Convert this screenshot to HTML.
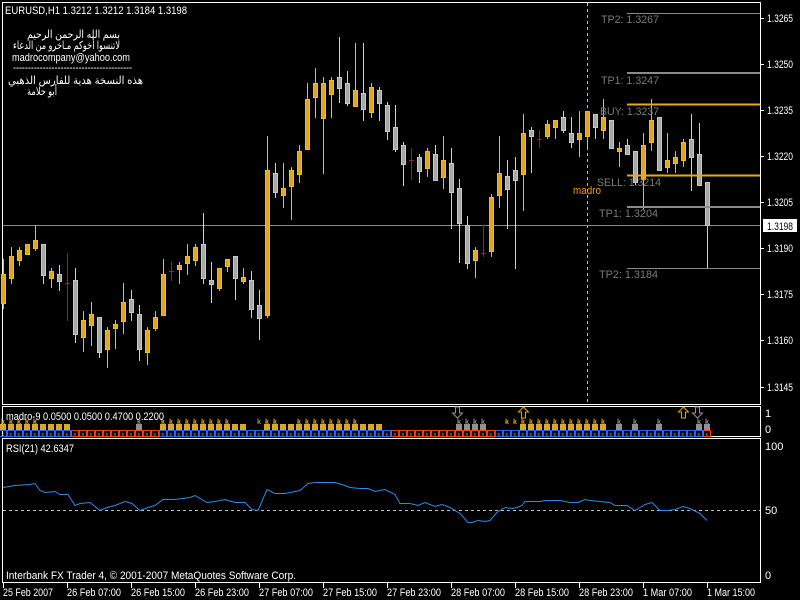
<!DOCTYPE html>
<html><head><meta charset="utf-8">
<style>
body{margin:0;background:#000;width:800px;height:600px;overflow:hidden}
svg{display:block}
text{font-family:"Liberation Sans","DejaVu Sans",sans-serif;font-size:11px}
</style></head><body>
<svg id="s" width="800" height="600" xmlns="http://www.w3.org/2000/svg">
<rect width="800" height="600" fill="#000"/>
<g fill="none" stroke="#fff" stroke-width="1">
<rect x="2.5" y="2.5" width="758" height="402"/>
<rect x="2.5" y="406.5" width="758" height="30"/>
<rect x="2.5" y="438.5" width="758" height="144"/>
</g>
<line x1="587.5" y1="3" x2="587.5" y2="404" stroke="#c0c0c0" stroke-dasharray="3,3"/>
<line x1="3" y1="225.5" x2="760" y2="225.5" stroke="#8a8a8a"/>
<g id="c"></g>
<line x1="627" y1="13.5" x2="760" y2="13.5" stroke="#8a8a8a"/>
<line x1="627" y1="73" x2="760" y2="73" stroke="#8a8a8a" stroke-width="2"/>
<line x1="627" y1="104.5" x2="760" y2="104.5" stroke="#e8a818" stroke-width="2"/>
<line x1="627" y1="175.5" x2="760" y2="175.5" stroke="#e8a818" stroke-width="2"/>
<line x1="627" y1="207" x2="760" y2="207" stroke="#8a8a8a" stroke-width="2"/>
<line x1="627" y1="268.5" x2="760" y2="268.5" stroke="#8a8a8a"/>
<g fill="#7a7a7a" lengthAdjust="spacingAndGlyphs">
<text x="601" y="23" textLength="58" lengthAdjust="spacingAndGlyphs">TP2: 1.3267</text>
<text x="601" y="84" textLength="58" lengthAdjust="spacingAndGlyphs">TP1: 1.3247</text>
<text x="600" y="115" textLength="59" lengthAdjust="spacingAndGlyphs">BUY: 1.3237</text>
<text x="597" y="186" textLength="64" lengthAdjust="spacingAndGlyphs">SELL: 1.3214</text>
<text x="599" y="217" textLength="59" lengthAdjust="spacingAndGlyphs">TP1: 1.3204</text>
<text x="599" y="278" textLength="59" lengthAdjust="spacingAndGlyphs">TP2: 1.3184</text>
</g>
<text x="573" y="194" fill="#f0a000" textLength="28" lengthAdjust="spacingAndGlyphs">madro</text>
<text x="5" y="14" fill="#fff" textLength="182" lengthAdjust="spacingAndGlyphs">EURUSD,H1  1.3212 1.3212 1.3184 1.3198</text>
<g fill="#fff" style="font-family:'DejaVu Sans',sans-serif;font-size:10px">
<text x="27" y="38" textLength="93" lengthAdjust="spacingAndGlyphs">بسم الله الرحمن الرحيم</text>
<text x="13" y="49" textLength="107" lengthAdjust="spacingAndGlyphs">لاتنسوا أخوكم مـاخرو من الدعاء</text>
<text x="12" y="61" textLength="118" lengthAdjust="spacingAndGlyphs" style="font-family:'Liberation Sans',sans-serif;font-size:11px">madrocompany@yahoo.com</text>
<text x="13" y="71" textLength="119" lengthAdjust="spacingAndGlyphs">----------------------------------------</text>
<text x="8" y="84" textLength="135" lengthAdjust="spacingAndGlyphs">هذه النسخة هدية للفارس الذهبي</text>
<text x="27" y="95" textLength="30" lengthAdjust="spacingAndGlyphs">أبو حلامة</text>
</g>
<g id="ax" fill="#fff"></g>
<rect x="763" y="219" width="34" height="13" fill="#fff"/>
<text x="767" y="230" fill="#000" textLength="26" lengthAdjust="spacingAndGlyphs">1.3198</text>
<g id="ind"></g>
<text x="6" y="420" fill="#fff" textLength="158" lengthAdjust="spacingAndGlyphs">madro-9 0.0500 0.0500 0.4700 0.2200</text>
<text x="765" y="417" fill="#fff">1</text>
<text x="765" y="433" fill="#fff">0</text>
<line x1="3" y1="510.5" x2="760" y2="510.5" stroke="#c0c0c0" stroke-dasharray="3,3"/>
<polyline id="rsi" fill="none" stroke="#2a8cf0" stroke-width="1"/>
<text x="6" y="452" fill="#fff" textLength="68" lengthAdjust="spacingAndGlyphs">RSI(21) 42.6347</text>
<text x="765" y="450" fill="#fff">100</text>
<text x="765" y="514" fill="#fff">50</text>
<text x="765" y="579" fill="#fff">0</text>
<text x="6" y="579" fill="#fff" textLength="290" lengthAdjust="spacingAndGlyphs">Interbank FX Trader 4, © 2001-2007 MetaQuotes Software Corp.</text>
<g id="tm" fill="#fff"></g>
</svg>
<script>
var NS="http://www.w3.org/2000/svg";
function el(p,t,a,txt){var e=document.createElementNS(NS,t);for(var k in a)e.setAttribute(k,a[k]);if(txt!=null)e.textContent=txt;document.getElementById(p).appendChild(e);return e;}
var C=[
['y',274,303,259,309],['y',256,278,247,284],['y',250,260,247,266],['y',244,254,244,254],['y',240,248,225,251],
['g',244,275,244,284],['y',271,278,268,288],['g',274,281,265,291],['d',283,283,253,321],['g',280,334,268,343],
['y',320,337,311,352],['y',314,325,302,346],['g',317,352,317,358],['y',330,349,327,368],['y',324,328,320,349],
['y',302,321,283,334],['g',299,312,290,321],['g',314,349,305,361],['y',330,352,327,365],['y',317,328,311,331],
['y',274,315,259,315],['d',271,271,262,281],['y',265,269,262,284],['y',256,263,244,275],['y',247,260,244,266],
['g',244,278,213,284],['g',280,284,262,303],['y',268,288,268,291],['y',259,266,259,272],['g',256,278,256,300],
['y',277,281,268,284],['g',280,309,271,318],['g',305,318,290,340],['y',170,315,136,318],['g',173,192,163,198],
['y',188,195,163,208],['y',170,186,167,220],['y',151,174,145,183],['y',99,149,83,149],['y',83,97,68,118],
['y',83,118,77,174],['y',80,94,77,118],['g',77,88,37,103],['g',83,103,71,106],['y',90,106,43,106],
['g',93,109,43,121],['y',87,112,83,118],['g',90,103,87,121],['g',105,131,102,140],['g',127,149,105,152],
['g',145,164,142,186],['d',160,160,148,180],['g',157,171,154,183],['y',151,168,148,177],['g',154,180,145,180],
['y',160,177,136,189],['g',163,192,148,229],['g',188,223,179,263],['g',225,263,216,269],['y',250,260,247,278],
['d',253,253,225,257],['y',197,251,194,257],['y',173,195,136,208],['g',176,189,160,229],['g',170,180,157,269],
['y',133,174,114,211],['g',130,136,127,173],['d',139,139,130,148],['y',124,136,120,139],['y',120,127,120,139],
['g',117,130,111,133],['g',133,142,117,148],['y',133,139,111,157],['y',111,136,111,148],['g',114,127,114,139],
['y',117,130,99,139],['g',120,148,120,148],['y',148,151,142,167],['g',145,154,139,154],['g',151,182,151,185],
['y',145,179,133,210],['y',120,142,99,151],['g',117,170,117,170],['y',160,167,133,173],['y',157,163,151,173],
['y',142,160,139,167],['g',139,157,114,191],['g',154,185,123,185],['g',182,225,182,268]];
C.forEach(function(c,k){var x=3+8*k;
 var wc=c[0]=='y'?'#f0c000':c[0]=='g'?'#d0d0d0':'#a02020';
 el('c','line',{x1:x+.5,y1:c[3],x2:x+.5,y2:c[4],stroke:wc});
 if(c[0]=='d'){el('c','line',{x1:x-2,y1:c[1]+.5,x2:x+3,y2:c[1]+.5,stroke:wc});}
 else{var h=Math.max(c[2]-c[1],2);el('c','rect',{x:x-1.5,y:c[1]+.5,width:4,height:h,fill:c[0]=='y'?'#e0a820':'#a8a8a8',stroke:c[0]=='y'?'#f0c000':'#c8c8c8'});}
});
var P=['1.3265',18,'1.3250',64,'1.3235',110,'1.3220',156,'1.3205',202,'1.3190',248,'1.3175',294,'1.3160',340,'1.3145',387];
for(var i=0;i<P.length;i+=2){el('ax','line',{x1:760,y1:P[i+1]+.5,x2:764,y2:P[i+1]+.5,stroke:'#fff'});el('ax','text',{x:767,y:P[i+1]+4,textLength:26,lengthAdjust:'spacingAndGlyphs'},P[i]);}
function inR(a,b,k){return k>=a&&k<=b;}
for(var k=0;k<89;k++){var x=3+8*k;
 var red=inR(9,19,k)||inR(49,61,k)||k==88;
 el('ind','rect',{x:x-3.5,y:430.5,width:7,height:6,fill:'none',stroke:red?'#f04010':'#3060f0'});
 el('ind','text',{x:x-1.5,y:436,fill:'#b0b0b0',style:'font-size:5px'},'x');
 var sq=null;
 if(inR(0,8,k)||inR(20,30,k)||inR(33,47,k)||inR(65,75,k))sq='#e0a820';
 if(k==17||inR(57,60,k)||k==77||k==79||k==82||k==87||k==88)sq='#909090';
 if(sq)el('ind','rect',{x:x-3,y:424,width:6,height:6,fill:sq});
 var m=null;
 if(inR(0,4,k)||inR(20,28,k)||inR(33,34,k)||inR(37,44,k)||inR(63,75,k))m='#e0a820';
 if(k==17||k==32||inR(57,60,k)||k==77||k==79||k==82||k==87||k==88)m='#909090';
 if(m)el('ind','text',{x:x-2,y:424,fill:m,style:'font-size:7px;font-weight:bold'},'k');
}
function arrow(x,up,col){var d=up?'M'+(x-2)+' 418 V412 H'+(x-5)+' L'+x+' 407 L'+(x+5)+' 412 H'+(x+2)+' V418 Z':'M'+(x-2)+' 407 V413 H'+(x-5)+' L'+x+' 418 L'+(x+5)+' 413 H'+(x+2)+' V407 Z';el('ind','path',{d:d,fill:'none',stroke:col});}
arrow(457.5,false,'#909090');arrow(523.5,true,'#f0a000');arrow(683.5,true,'#f0a000');arrow(697.5,false,'#909090');
var R=[3,487,15,485,30,484,35,483,40,490,45,492,55,491,60,494,68,494,75,505,80,503,90,502,100,510,107,507,115,505,125,501,132,503,140,510,148,507,155,505,163,499,175,499,190,497,195,495,200,498,207,502,215,501,225,499,235,502,245,502,252,509,258,510,267,489,275,493,285,493,300,490,308,483,315,482,335,482,345,485,350,487,360,488,368,488,375,491,385,489,395,494,400,503,410,503,418,505,425,502,435,506,442,504,450,507,460,513,468,522,472,522,478,520,485,521,490,520,497,512,505,507,512,508,517,507,522,505,525,501,540,501,545,500,560,500,570,502,578,502,585,499,590,500,600,501,610,502,615,505,627,505,635,510,640,507,645,504,652,502,660,510,668,510,675,509,683,506,690,508,700,513,707,520];
var pts=[];for(var i=0;i<R.length;i+=2)pts.push(R[i]+','+(R[i+1]+.5));document.getElementById('rsi').setAttribute('points',pts.join(' '));
var T=[['25 Feb 2007',50],['26 Feb 07:00',54],['26 Feb 15:00',54],['26 Feb 23:00',54],['27 Feb 07:00',54],['27 Feb 15:00',54],['27 Feb 23:00',54],['28 Feb 07:00',54],['28 Feb 15:00',54],['28 Feb 23:00',54],['1 Mar 07:00',49],['1 Mar 15:00',48]];
T.forEach(function(t,i){var x=3+64*i;el('tm','line',{x1:x+.5,y1:583,x2:x+.5,y2:588,stroke:'#fff'});el('tm','text',{x:x,y:596,textLength:t[1],lengthAdjust:'spacingAndGlyphs'},t[0]);});
</script>
</body></html>
